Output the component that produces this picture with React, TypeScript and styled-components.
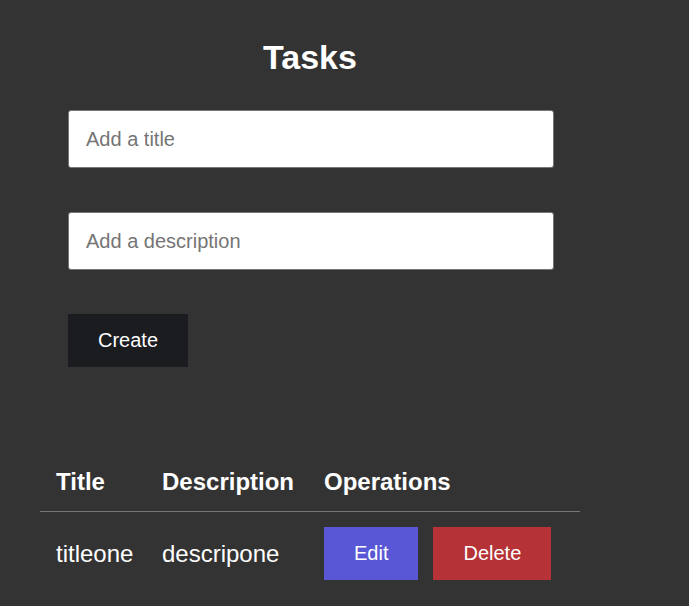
import React from "react";
import styled, { createGlobalStyle } from "styled-components";

const Global = createGlobalStyle`
  html, body { margin: 0; padding: 0; background: #333333; }
  body { font-family: "Liberation Sans", Arial, sans-serif; color: #ffffff; }
  * { box-sizing: border-box; }
`;

const Page = styled.main`
  width: 540px;
  margin-left: 40px;
  padding-top: 38px;
  display: flex;
  flex-direction: column;
`;

const Heading = styled.h1`
  margin: 0;
  font-size: 34px;
  line-height: 39px;
  font-weight: bold;
  text-align: center;
  color: #ffffff;
`;

const Form = styled.form`
  margin: 33px 0 0 28px;
  width: 486px;
  display: flex;
  flex-direction: column;
  align-items: flex-start;
  gap: 44px;
`;

const TextInput = styled.input`
  width: 100%;
  height: 58px;
  padding: 0 17px;
  border: 1px solid #767676;
  border-radius: 3px;
  background: #ffffff;
  font-family: "Liberation Sans", Arial, sans-serif;
  font-size: 20px;
  color: #222;
  outline: none;
  &::placeholder { color: #757575; }
`;

const Button = styled.button<{ $bg: string }>`
  height: 53px;
  padding: 0 30px;
  border: none;
  border-radius: 0;
  background: ${(p) => p.$bg};
  color: #ffffff;
  font-family: "Liberation Sans", Arial, sans-serif;
  font-size: 20px;
  cursor: pointer;
  white-space: nowrap;
`;

const Table = styled.table`
  margin-top: 85px;
  width: 540px;
  border-collapse: collapse;
  table-layout: fixed;
`;

const HeadRow = styled.tr`
  border-bottom: 1px solid #777777;
`;

const Th = styled.th<{ $w?: number }>`
  ${(p) => (p.$w ? `width: ${p.$w}px;` : "")}
  padding: 16px;
  text-align: left;
  font-size: 24px;
  font-weight: bold;
  line-height: 27px;
  white-space: nowrap;
  color: #ffffff;
`;

const Td = styled.td`
  padding: 15px 16px;
  font-size: 24px;
  line-height: 27px;
  vertical-align: middle;
  white-space: nowrap;
  color: #ffffff;
`;

const Ops = styled.div`
  display: flex;
  gap: 15px;
`;

export default function App() {
  return (
    <>
      <Global />
      <Page>
        <Heading>Tasks</Heading>
        <Form onSubmit={(e) => e.preventDefault()}>
          <TextInput placeholder="Add a title" />
          <TextInput placeholder="Add a description" />
          <Button $bg="#1b1c20" type="submit">Create</Button>
        </Form>
        <Table>
          <thead>
            <HeadRow>
              <Th $w={106}>Title</Th>
              <Th $w={162}>Description</Th>
              <Th>Operations</Th>
            </HeadRow>
          </thead>
          <tbody>
            <tr>
              <Td>titleone</Td>
              <Td>descripone</Td>
              <Td>
                <Ops>
                  <Button $bg="#5a57d6">Edit</Button>
                  <Button $bg="#b53236">Delete</Button>
                </Ops>
              </Td>
            </tr>
          </tbody>
        </Table>
      </Page>
    </>
  );
}
